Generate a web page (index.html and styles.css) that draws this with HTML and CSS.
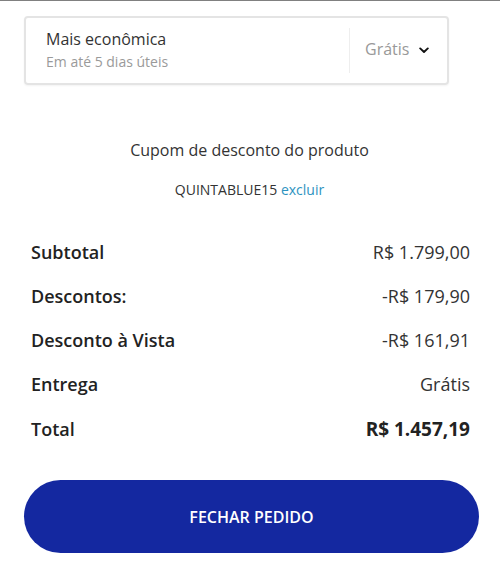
FILE: index.html
```html
<!DOCTYPE html>
<html lang="pt-BR">
<head>
<meta charset="utf-8">
<link rel="stylesheet" href="styles.css">
</head>
<body>
<div class="page">
  <div class="shipping">
    <div class="ship-info">
      <div class="ship-title">Mais econômica</div>
      <div class="ship-sub">Em até 5 dias úteis</div>
    </div>
    <div class="ship-price">
      <span>Grátis</span>
      <svg class="chev" width="10" height="7" viewBox="0 0 10 7"><path d="M1.2 1.4 L5 5 L8.8 1.4" fill="none" stroke="#111" stroke-width="1.9" stroke-linecap="round" stroke-linejoin="round"/></svg>
    </div>
  </div>

  <div class="coupon">
    <div class="coupon-title">Cupom de desconto do produto</div>
    <div class="coupon-code">QUINTABLUE15 <a class="remove">excluir</a></div>
  </div>

  <div class="summary">
    <div class="row"><span class="label">Subtotal</span><span class="value">R$ 1.799,00</span></div>
    <div class="row"><span class="label">Descontos:</span><span class="value">-R$ 179,90</span></div>
    <div class="row"><span class="label">Desconto à Vista</span><span class="value">-R$ 161,91</span></div>
    <div class="row"><span class="label">Entrega</span><span class="value">Grátis</span></div>
    <div class="row total"><span class="label">Total</span><span class="value">R$ 1.457,19</span></div>
  </div>

  <button class="checkout">FECHAR PEDIDO</button>
</div>
</body>
</html>
```
FILE: styles.css
```css
* { box-sizing: border-box; }
html, body { margin: 0; padding: 0; background: #fff; }
body {
  font-family: "Open Sans", "Noto Sans", sans-serif;
  color: #222;
  border-top: 1px solid #808080;
}
.page {
  width: 500px;
  padding: 15px 21px 0 24px;
}
.shipping {
  width: 425px;
  height: 69px;
  border: 2px solid #e4e4e4;
  border-radius: 4px;
  display: flex;
  align-items: center;
  box-shadow: 0 1px 2px rgba(0,0,0,0.05);
}
.ship-info {
  flex: 1;
  padding-left: 20px;
  padding-top: 1px;
}
.ship-title {
  font-size: 16px;
  color: #333;
  line-height: 22px;
}
.ship-sub {
  font-size: 14px;
  color: #9a9a9a;
  line-height: 24px;
}
.ship-price {
  width: 98px;
  height: 45px;
  border-left: 1px solid #eeeeee;
  display: flex;
  align-items: center;
  padding-left: 15px;
  padding-bottom: 3px;
  gap: 10px;
  font-size: 16px;
  color: #999;
}
.chev { display: block; margin-top: 2px; }
.coupon {
  text-align: center;
  padding-right: 4px;
  margin-top: 54px;
}
.coupon-title {
  font-size: 16px;
  color: #333;
  line-height: 22px;
}
.coupon-code {
  margin-top: 19px;
  font-size: 14px;
  color: #333;
  line-height: 20px;
}
.remove { color: #2d93bf; }
.summary {
  margin-top: 40px;
  padding-left: 7px;
  padding-right: 9px;
}
.row {
  display: flex;
  justify-content: space-between;
  align-items: baseline;
  height: 44px;
}
.label {
  font-size: 18px;
  font-weight: 600;
  color: #222;
}
.value {
  font-size: 18px;
  color: #333;
}
.total .value {
  font-size: 19px;
  font-weight: 700;
  color: #222;
}
.checkout {
  display: block;
  margin-top: 20px;
  width: 455px;
  height: 73px;
  border: none;
  border-radius: 37px;
  background: #1428a0;
  color: #fff;
  font-family: inherit;
  font-size: 16px;
  font-weight: 600;
}
```
